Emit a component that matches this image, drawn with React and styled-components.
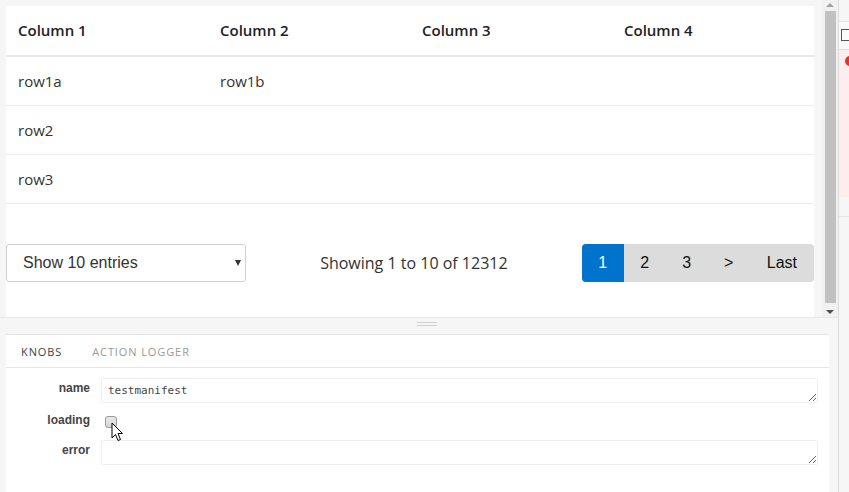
import React from "react";
import styled, { createGlobalStyle } from "styled-components";

const Global = createGlobalStyle`
  html, body { margin: 0; padding: 0; }
  body { background: #f6f6f6; overflow: hidden; }
  * { box-sizing: border-box; }
`;

const Shell = styled.div`
  display: flex;
  width: 849px;
  height: 492px;
  overflow: hidden;
  background: #f6f6f6;
`;

const Main = styled.div`
  width: 838px;
  flex: none;
  display: flex;
  flex-direction: column;
`;

const PreviewArea = styled.div`
  height: 318px;
  flex: none;
  display: flex;
  border-bottom: 1px solid #e8e8e8;
`;

const PreviewScroll = styled.div`
  flex: 1;
  padding: 6px 8px 0 6px;
  overflow: hidden;
`;

const Card = styled.div`
  background: #fff;
`;

const Table = styled.table`
  width: 100%;
  table-layout: fixed;
  border-collapse: collapse;
  font-family: "Open Sans", sans-serif;
  color: #333;
`;

const Th = styled.th`
  height: 50px;
  padding: 0 12px 1px;
  text-align: left;
  font-size: 15px;
  font-weight: 600;
  color: #222;
  border-bottom: 2px solid #e9e9e9;
`;

const Td = styled.td`
  height: 49px;
  padding: 0 12px;
  font-size: 15px;
  border-bottom: 1px solid #ececec;
`;

const Footer = styled.div`
  display: flex;
  align-items: center;
  justify-content: space-between;
  padding: 40px 0 40px;
`;

const SelectWrap = styled.div`
  position: relative;
  width: 240px;
  &::after {
    content: "";
    position: absolute;
    right: 5px;
    top: 16px;
    border-top: 6px solid #333;
    border-left: 3px solid transparent;
    border-right: 3px solid transparent;
  }
`;

const Select = styled.select`
  appearance: none;
  width: 100%;
  height: 38px;
  padding: 0 16px;
  border: 1px solid #d0d0d0;
  border-radius: 3px;
  background: #fff;
  font-family: "Liberation Sans", Arial, sans-serif;
  font-size: 16px;
  color: #333;
`;

const Info = styled.div`
  font-family: "Open Sans", sans-serif;
  font-size: 16px;
  color: #333;
`;

const Pager = styled.div`
  display: flex;
  height: 38px;
  border-radius: 4px;
  overflow: hidden;
  background: #dcdcdc;
`;

const PageBtn = styled.div`
  display: flex;
  align-items: center;
  justify-content: center;
  min-width: 42px;
  padding: 0 ${(p) => (p.$wide ? "17px" : "0")};
  font-family: "Liberation Sans", Arial, sans-serif;
  font-size: 16px;
  color: ${(p) => (p.$active ? "#fff" : "#111")};
  background: ${(p) => (p.$active ? "#0074cc" : "transparent")};
`;

const Scrollbar = styled.div`
  width: 16px;
  flex: none;
  background: #f1f1f1;
  display: flex;
  flex-direction: column;
  align-items: center;
`;

const Arrow = styled.div`
  width: 0;
  height: 0;
  margin: ${(p) => (p.$down ? "7px 0 0" : "3px 0 4px")};
  border-left: 4px solid transparent;
  border-right: 4px solid transparent;
  ${(p) =>
    p.$down ? "border-top: 4px solid #505050;" : "border-bottom: 4px solid #a3a3a3;"}
`;

const Thumb = styled.div`
  width: 11px;
  height: 292px;
  background: #c1c1c1;
  margin-left: 1px;
`;

const Splitter = styled.div`
  height: 16px;
  flex: none;
  padding: 4px 0 0 417px;
`;

const Grip = styled.div`
  width: 20px;
  height: 4px;
  border-top: 1px solid #cfcfcf;
  border-bottom: 1px solid #cfcfcf;
`;

const AddonPanel = styled.div`
  flex: 1;
  margin: 0 9px 0 6px;
  background: #fff;
  border-top: 1px solid #e6e6e6;
  position: relative;
`;

const Tabs = styled.div`
  display: flex;
  height: 33px;
  align-items: center;
  border-bottom: 1px solid #e6e6e6;
`;

const Tab = styled.div`
  padding: 0 15px;
  font-family: "Open Sans", sans-serif;
  font-size: 11px;
  letter-spacing: 0.9px;
  color: ${(p) => (p.$active ? "#444" : "#999")};
`;

const Form = styled.div`
  display: grid;
  grid-template-columns: 84px 1fr;
  column-gap: 11px;
  row-gap: 8px;
  padding: 10px 11px 0 0;
`;

const Label = styled.div`
  text-align: right;
  padding-top: ${(p) => (p.$pt != null ? p.$pt : 3)}px;
  font-family: "Liberation Sans", Arial, sans-serif;
  font-size: 12px;
  line-height: 14px;
  font-weight: bold;
  color: #444;
`;

const TextArea = styled.textarea`
  display: block;
  width: 100%;
  height: 25px;
  margin: 0;
  padding: 5px 6px;
  border: 1px solid #efefef;
  border-radius: 2px;
  font-family: "DejaVu Sans Mono", monospace;
  font-size: 11px;
  line-height: 13px;
  color: #444;
  background: #fff;
  outline: none;
`;

const CheckRow = styled.div`
  height: 21px;
  display: flex;
  align-items: center;
  padding-left: 4px;
`;

const Check = styled.input`
  appearance: none;
  width: 12px;
  height: 12px;
  margin: 0;
  border: 1px solid #9a9a9a;
  border-radius: 3px;
  background: linear-gradient(#e8e8e8, #d6d6d6);
`;

const Cursor = styled.svg`
  position: absolute;
  left: 105px;
  top: 87px;
`;

const Side = styled.div`
  flex: 1;
  border-left: 1px solid #dcdcdc;
  display: flex;
  flex-direction: column;
`;

const SideTop = styled.div`
  height: 22px;
  border-bottom: 1px solid #e3e3e3;
`;

const SideBar = styled.div`
  height: 27px;
  padding: 7px 0 0 2px;
  background: #fafafa;
`;

const SideBox = styled.div`
  width: 10px;
  height: 12px;
  border: 1px solid #555;
`;

const SideError = styled.div`
  height: 148px;
  background: #fdeeee;
  border-top: 1px solid #f3d6d6;
  padding: 6px 0 0 6px;
`;

const Dot = styled.div`
  width: 10px;
  height: 10px;
  border-radius: 50%;
  background: #e8322f;
`;

const SideRest = styled.div`
  height: 20px;
  border-bottom: 1px solid #e6e6e6;
`;

const cols = ["Column 1", "Column 2", "Column 3", "Column 4"];
const rows = [
  ["row1a", "row1b", "", ""],
  ["row2", "", "", ""],
  ["row3", "", "", ""],
];

export default function App() {
  return (
    <Shell>
      <Global />
      <Main>
        <PreviewArea>
          <PreviewScroll>
            <Card>
              <Table>
                <thead>
                  <tr>
                    {cols.map((c) => (
                      <Th key={c}>{c}</Th>
                    ))}
                  </tr>
                </thead>
                <tbody>
                  {rows.map((r, i) => (
                    <tr key={i}>
                      {r.map((c, j) => (
                        <Td key={j}>{c}</Td>
                      ))}
                    </tr>
                  ))}
                </tbody>
              </Table>
              <Footer>
                <SelectWrap>
                  <Select defaultValue="10">
                    <option value="10">Show 10 entries</option>
                    <option value="25">Show 25 entries</option>
                  </Select>
                </SelectWrap>
                <Info>Showing 1 to 10 of 12312</Info>
                <Pager>
                  <PageBtn $active>1</PageBtn>
                  <PageBtn>2</PageBtn>
                  <PageBtn>3</PageBtn>
                  <PageBtn>&gt;</PageBtn>
                  <PageBtn $wide>Last</PageBtn>
                </Pager>
              </Footer>
            </Card>
          </PreviewScroll>
          <Scrollbar>
            <Arrow />
            <Thumb />
            <Arrow $down />
          </Scrollbar>
        </PreviewArea>
        <Splitter>
          <Grip />
        </Splitter>
        <AddonPanel>
          <Tabs>
            <Tab $active>KNOBS</Tab>
            <Tab>ACTION LOGGER</Tab>
          </Tabs>
          <Form>
            <Label>name</Label>
            <TextArea defaultValue="testmanifest" spellCheck={false} />
            <Label $pt={2}>loading</Label>
            <CheckRow>
              <Check type="checkbox" />
            </CheckRow>
            <Label>error</Label>
            <TextArea defaultValue="" />
          </Form>
          <Cursor width="13" height="20" viewBox="0 0 13 20">
            <path
              d="M1 1 L1 16 L4.5 12.5 L7 18.5 L9.5 17.5 L7 11.5 L11.5 11.5 Z"
              fill="#fff"
              stroke="#000"
              strokeWidth="1"
              strokeLinejoin="round"
            />
          </Cursor>
        </AddonPanel>
      </Main>
      <Side>
        <SideTop />
        <SideBar>
          <SideBox />
        </SideBar>
        <SideError>
          <Dot />
        </SideError>
        <SideRest />
      </Side>
    </Shell>
  );
}
